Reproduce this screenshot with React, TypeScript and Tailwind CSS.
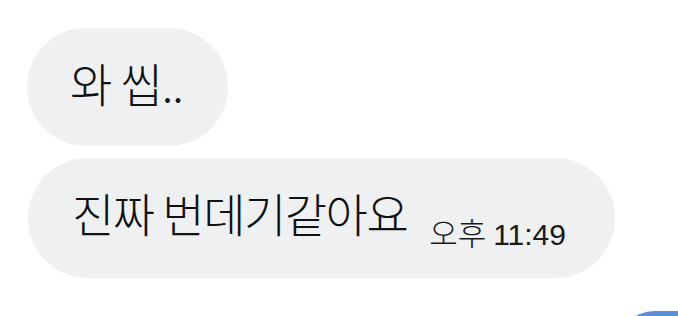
import React from 'react';

const App: React.FC = () => {
  return (
    <div className="w-[678px] h-[316px] overflow-hidden bg-white flex flex-col" style={{ fontFamily: '"Noto Sans CJK KR", "Noto Sans", sans-serif' }}>
      <div className="shrink-0 ml-[27px] mt-[28px] h-[118px] w-[201px] rounded-full bg-[#eef0f2] flex items-center pl-[43px] pb-[10px]">
        <span className="text-[46px] leading-none font-light text-[#111111] tracking-[-1px]">와 씹..</span>
      </div>
      <div className="shrink-0 ml-[28px] mt-[12px] h-[120px] w-[587px] rounded-full bg-[#eef0f2] flex items-center pl-[44px]">
        <span className="text-[46px] leading-none font-light text-[#111111] tracking-[-1.5px] -mt-[12px] whitespace-nowrap">진짜 번데기같아요</span>
        <span className="ml-[22px] mt-[30px] text-[31px] leading-none font-light text-[#1a1a1a] whitespace-nowrap">
          <span>오후</span>{' '}
          <span className="text-[30px] font-normal" style={{ fontFamily: '"Liberation Sans", Arial, sans-serif' }}>11:49</span>
        </span>
      </div>
      <div className="shrink-0 ml-auto mt-[33px] h-[60px] w-[63px] rounded-tl-[40px] bg-[#5b8ed6]" />
    </div>
  );
};

export default App;
